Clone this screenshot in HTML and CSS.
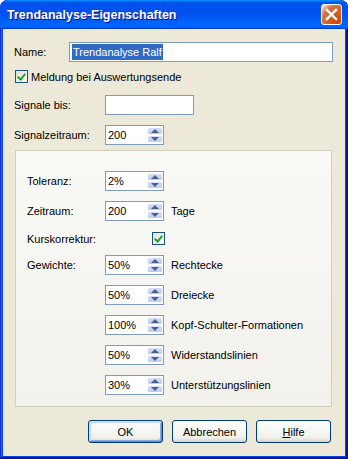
FILE: index.html
```html
<!DOCTYPE html>
<html lang="de">
<head>
    <meta charset="UTF-8">
    <title>Trendanalyse-Eigenschaften</title>
    <link rel="stylesheet" href="styles.css">
</head>
<body>
<div class="window">
    <!--Titelleiste-->
    <div class="titlebar">
        <span class="title">Trendanalyse-Eigenschaften</span>
        <span class="close">
            <svg width="13" height="13" viewBox="0 0 13 13"><path d="M2 2 L11 11 M11 2 L2 11" stroke="#fff" stroke-width="2.4" stroke-linecap="square"/></svg>
        </span>
    </div>
    <div class="client">
        <div class="row">
            <span class="lbl lbl-name">Name:</span>
            <div class="edit edit-name"><span class="sel">Trendanalyse Ralf</span></div>
        </div>
        <div class="row row-check">
            <span class="check on"></span>
            <span class="check-text">Meldung bei Auswertungsende</span>
        </div>
        <div class="row row-signale">
            <span class="lbl">Signale bis:</span>
            <div class="edit edit-date"></div>
        </div>
        <div class="row row-zeit">
            <span class="lbl">Signalzeitraum:</span>
            <div class="spin"><span class="val">200</span><span class="arrows"><span class="up"></span><span class="down"></span></span></div>
        </div>

        <!--Gruppe-->
        <div class="group">
            <div class="row">
                <span class="lbl lbl-g">Toleranz:</span>
                <div class="spin"><span class="val">2%</span><span class="arrows"><span class="up"></span><span class="down"></span></span></div>
            </div>
            <div class="row g-row">
                <span class="lbl lbl-g">Zeitraum:</span>
                <div class="spin"><span class="val">200</span><span class="arrows"><span class="up"></span><span class="down"></span></span></div>
                <span class="after">Tage</span>
            </div>
            <div class="row g-row row-kurs">
                <span class="lbl lbl-g">Kurskorrektur:</span>
                <span class="check on kurs"></span>
            </div>
            <div class="row g-row">
                <span class="lbl lbl-g">Gewichte:</span>
                <div class="spin"><span class="val">50%</span><span class="arrows"><span class="up"></span><span class="down"></span></span></div>
                <span class="after">Rechtecke</span>
            </div>
            <div class="row g-row">
                <span class="lbl lbl-g"></span>
                <div class="spin"><span class="val">50%</span><span class="arrows"><span class="up"></span><span class="down"></span></span></div>
                <span class="after">Dreiecke</span>
            </div>
            <div class="row g-row">
                <span class="lbl lbl-g"></span>
                <div class="spin"><span class="val">100%</span><span class="arrows"><span class="up"></span><span class="down"></span></span></div>
                <span class="after">Kopf-Schulter-Formationen</span>
            </div>
            <div class="row g-row">
                <span class="lbl lbl-g"></span>
                <div class="spin"><span class="val">50%</span><span class="arrows"><span class="up"></span><span class="down"></span></span></div>
                <span class="after">Widerstandslinien</span>
            </div>
            <div class="row g-row">
                <span class="lbl lbl-g"></span>
                <div class="spin"><span class="val">30%</span><span class="arrows"><span class="up"></span><span class="down"></span></span></div>
                <span class="after">Unterstützungslinien</span>
            </div>
        </div>

        <!--Knöpfe-->
        <div class="buttons">
            <span class="btn default">OK</span>
            <span class="btn">Abbrechen</span>
            <span class="btn"><u>H</u>ilfe</span>
        </div>
    </div>
</div>
</body>
</html>
```
FILE: styles.css
```css
* {
    margin: 0;
    padding: 0;
    box-sizing: border-box;
}

body {
    font: 11px "Liberation Sans", Arial, sans-serif;
    color: #000;
    background: #fff;
}

.window {
    width: 348px;
    height: 459px;
    display: flex;
    flex-direction: column;
    background: #0842d6;
    border-radius: 8px 8px 0 0;
    overflow: hidden;
    box-shadow: inset -1px -1px #00138c, inset 1px 1px #0831d9, inset -2px -2px #001ea0, inset 2px 2px #166aee;
}

.titlebar {
    flex: none;
    height: 29px;
    display: flex;
    align-items: center;
    justify-content: space-between;
    padding: 0 6px 0 7px;
    border-radius: 8px 8px 0 0;
    background: linear-gradient(180deg, #0997ff, #0053ee 8%, #0050ee 40%, #0066ff 88%, #0066ff 93%, #005bff 95%, #003dd7 96%, #003dd7);
}

.title {
    color: #fff;
    font-weight: bold;
    font-size: 12.5px;
    text-shadow: 1px 1px #0f1089;
}

.close {
    width: 21px;
    height: 21px;
    display: flex;
    align-items: center;
    justify-content: center;
    border: 1px solid #fff;
    border-radius: 3px;
    background: radial-gradient(circle at 90% 90%, #cc4600 0, #dc6527 55%, #cd7546 70%, #ffccb2 90%, #fff 100%);
}

.client {
    flex: 1;
    margin: 0 3px 3px;
    background: #ece9d8;
    padding: 13px 12px 0 11px;
}

.row {
    display: flex;
    align-items: center;
    height: 20px;
}

.lbl {
    width: 91px;
    flex: none;
}

.lbl-name {
    width: 55px;
}

.edit {
    height: 20px;
    border: 1px solid #7f9db9;
    background: #fff;
    padding: 1px 2px;
}

.edit-name {
    width: 264px;
}

.edit-date {
    width: 89px;
}

.sel {
    display: inline-block;
    background: #316ac5;
    color: #fff;
    padding: 1px 1px;
    line-height: 14px;
}

.row-check {
    height: 13px;
    margin-top: 8px;
    padding-left: 1px;
}

.check {
    width: 13px;
    height: 13px;
    flex: none;
    border: 1px solid #1c5180;
    background: linear-gradient(135deg, #dcdcd7, #fff);
    position: relative;
}

.check.on::after {
    content: "";
    position: absolute;
    left: 3px;
    top: 1px;
    width: 3px;
    height: 6px;
    border: solid #21a121;
    border-width: 0 2px 2px 0;
    transform: rotate(40deg);
}

.check-text {
    margin-left: 3px;
}

.row-signale {
    margin-top: 12px;
}

.row-zeit {
    margin-top: 10px;
}

.spin {
    width: 59px;
    height: 20px;
    flex: none;
    display: flex;
    align-items: center;
    border: 1px solid #7f9db9;
    background: #fff;
    padding: 1px 0 1px 2px;
}

.val {
    flex: 1;
}

.arrows {
    width: 16px;
    height: 100%;
    display: flex;
    flex-direction: column;
}

.up, .down {
    flex: 1;
    border: 1px solid #fff;
    border-radius: 2px;
    background: linear-gradient(#d6e0fb, #b9cbf5);
    position: relative;
}

.up::after, .down::after {
    content: "";
    position: absolute;
    left: 3px;
    border-left: 4px solid transparent;
    border-right: 4px solid transparent;
}

.up::after {
    top: 1px;
    border-bottom: 4px solid #4d6185;
}

.down::after {
    top: 1px;
    border-top: 4px solid #4d6185;
}

.group {
    margin: 5px 1px 0;
    border: 1px solid #d0d0bf;
    background: linear-gradient(#f9f9f6, #f2f1ec);
    padding: 20px 11px 11px;
}

.lbl-g {
    width: 78px;
}

.g-row {
    margin-top: 10px;
}

.row-kurs {
    height: 13px;
    margin-top: 11px;
}

.kurs {
    margin-left: 47px;
}

.after {
    margin-left: 7px;
}

.buttons {
    display: flex;
    justify-content: flex-end;
    gap: 9px;
    margin: 13px 2px 0 0;
}

.btn {
    width: 75px;
    height: 23px;
    display: flex;
    align-items: center;
    justify-content: center;
    border: 1px solid #003c74;
    border-radius: 3px;
    background: linear-gradient(180deg, #fff, #f0f0ea 80%, #d6d0c5);
}

.btn.default {
    box-shadow: inset 1px 1px #cee7ff, inset -1px -1px #6982ee, inset 2px 2px #bcd4f6, inset -2px -2px #89ade4;
}
```
